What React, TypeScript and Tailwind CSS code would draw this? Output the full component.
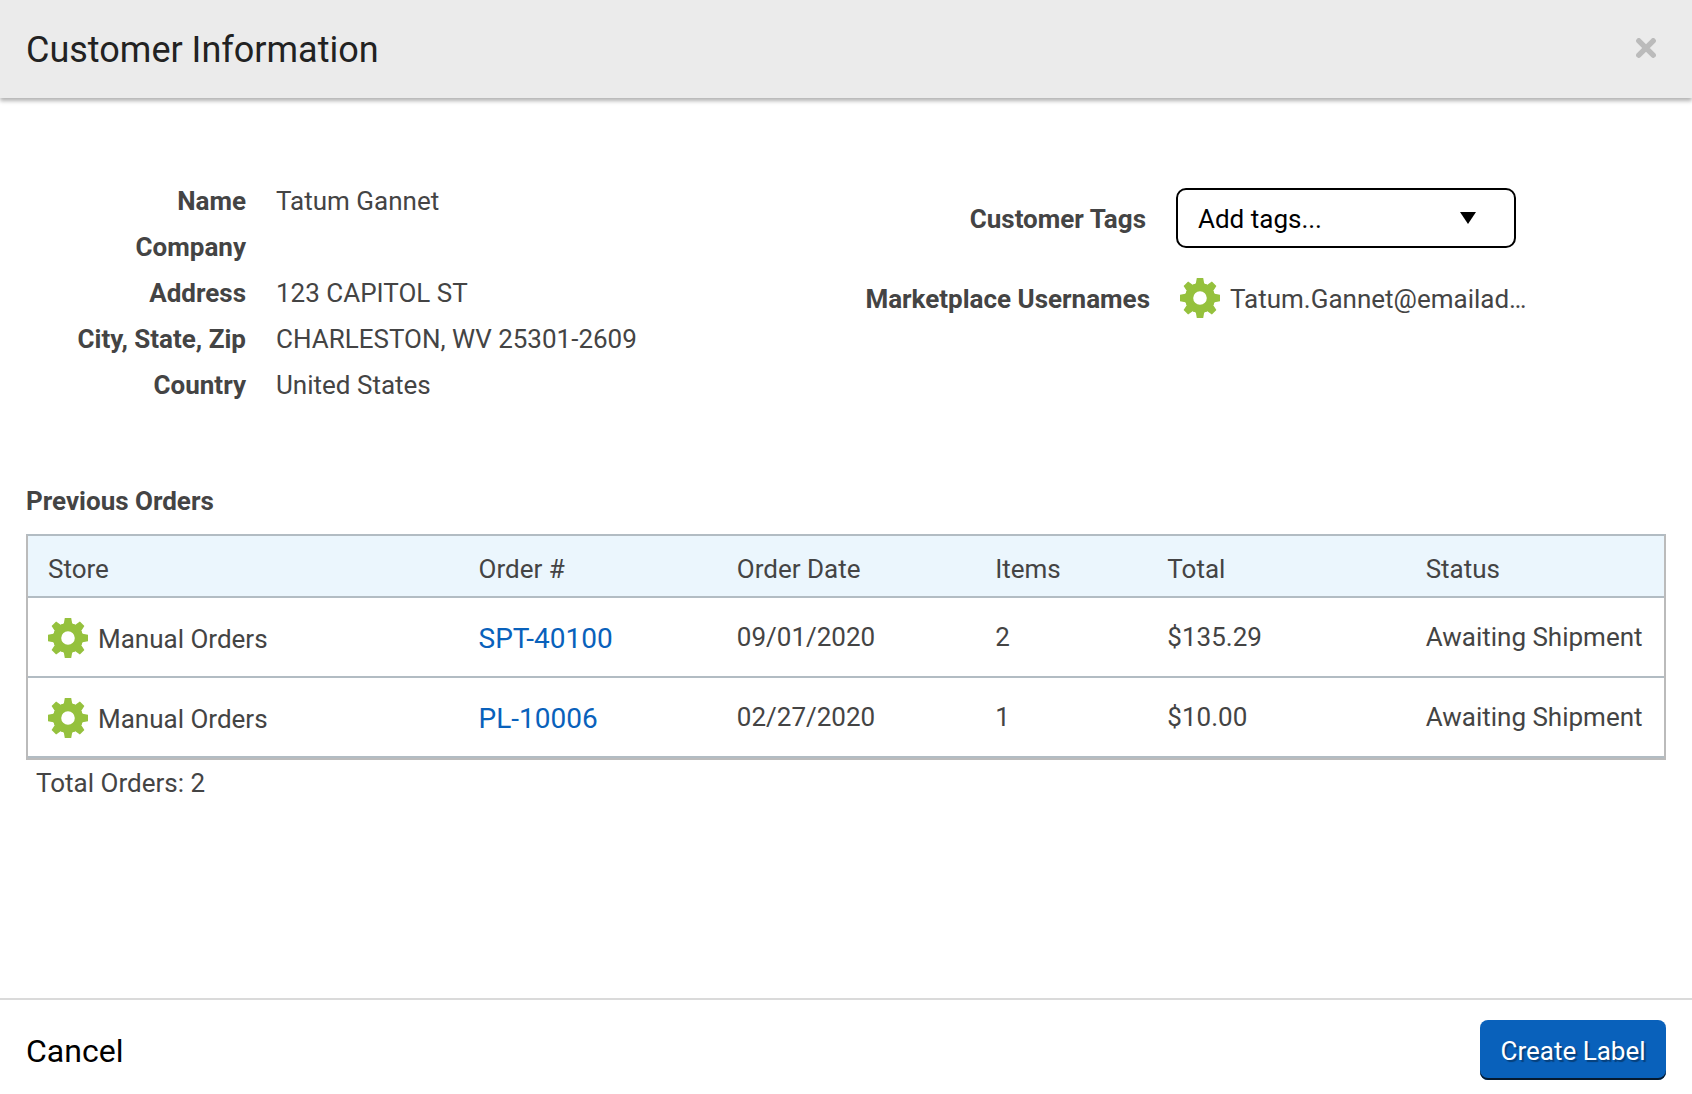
import type { ReactNode } from 'react';

const customer = [
  { label: 'Name', value: 'Tatum Gannet' },
  { label: 'Company', value: '' },
  { label: 'Address', value: '123 CAPITOL ST' },
  { label: 'City, State, Zip', value: 'CHARLESTON, WV 25301-2609' },
  { label: 'Country', value: 'United States' },
];

const orders = [
  { store: 'Manual Orders', number: 'SPT-40100', date: '09/01/2020', items: 2, total: '$135.29', status: 'Awaiting Shipment' },
  { store: 'Manual Orders', number: 'PL-10006', date: '02/27/2020', items: 1, total: '$10.00', status: 'Awaiting Shipment' },
];

const columns = [
  { title: 'Store', width: 'w-5/19' },
  { title: 'Order #', width: 'w-3/19' },
  { title: 'Order Date', width: 'w-3/19' },
  { title: 'Items', width: 'w-2/19' },
  { title: 'Total', width: 'w-3/19' },
  { title: 'Status', width: 'w-3/19' },
];

const GearIcon = () => (
  <svg viewBox="0 0 40 40" className="size-10 shrink-0" fill="#95c13d" aria-hidden="true">
    <circle cx="20" cy="20" r="10.8" fill="none" stroke="#95c13d" strokeWidth="8" />
    {[0, 45, 90, 135, 180, 225, 270, 315].map(angle => (
      <path key={angle} d="M16.8 0h6.4l1 5.4 2.8 1.4V10H13V6.8l2.8-1.4z" transform={`rotate(${angle} 20 20)`} />
    ))}
  </svg>
);

const Cell = ({ children }: { children: ReactNode }) => (
  <td className="h-20 border-b-2 border-[#b2bcc3] pl-5 whitespace-nowrap">{children}</td>
);

export default function App() {
  return (
    <div className="flex min-h-screen flex-col bg-white font-[Roboto,sans-serif] text-[26px] leading-[46px] text-[#444]">
      <header className="flex h-[98px] items-center justify-between bg-[#ebebeb] pr-9 pl-[26px] shadow-[0_3px_4px_rgba(0,0,0,0.3)]">
        <h1 className="pt-0.5 text-4xl text-[#222]">Customer Information</h1>
        <button type="button" aria-label="Close" className="pb-0.5">
          <svg viewBox="0 0 20 20" className="size-5" stroke="#bbb" strokeWidth="5.4" strokeLinecap="round">
            <path d="M2.8 2.8l14.4 14.4M17.2 2.8L2.8 17.2" />
          </svg>
        </button>
      </header>

      <main className="flex-1 px-[26px] pt-20">
        <div className="flex">
          <dl className="w-1/2">
            {customer.map(({ label, value }) => (
              <div className="flex gap-[30px]" key={label}>
                <dt className="w-[220px] text-right font-bold">{label}</dt>
                <dd>{value}</dd>
              </div>
            ))}
          </dl>

          <div className="flex w-1/2 flex-col gap-[30px] pt-2.5">
            <div className="flex items-center gap-[30px]">
              <label htmlFor="tags" className="w-[300px] pt-0.5 text-right font-bold">
                Customer Tags
              </label>
              <div className="relative w-[340px]">
                <select
                  id="tags"
                  className="h-[60px] w-full appearance-none rounded-[10px] border-2 border-black bg-white px-5 pt-0.5 text-black"
                >
                  <option>Add tags...</option>
                </select>
                <svg viewBox="0 0 16 12" className="pointer-events-none absolute top-6 right-10 h-3 w-4">
                  <path d="M0 0h16L8 12z" />
                </svg>
              </div>
            </div>
            <div className="flex h-10 items-center gap-[30px]">
              <span className="w-[304px] pt-0.5 text-right font-bold">Marketplace Usernames</span>
              <div className="flex items-center gap-2.5">
                <GearIcon />
                <span className="pt-0.5">Tatum.Gannet@emailad…</span>
              </div>
            </div>
          </div>
        </div>

        <h2 className="mt-[70px] font-bold">Previous Orders</h2>
        <table className="mt-2.5 w-full table-fixed border-separate border-spacing-0 border-2 border-[#bbb] border-t-[#b2bcc3]">
          <thead>
            <tr>
              {columns.map(({ title, width }) => (
                <th
                  key={title}
                  className={`${width} h-[62px] border-b-2 border-[#b2bcc3] bg-[#ebf6fd] pt-1.5 pl-5 text-left font-normal`}
                >
                  {title}
                </th>
              ))}
            </tr>
          </thead>
          <tbody>
            {orders.map(order => (
              <tr key={order.number}>
                <Cell>
                  <div className="flex items-center gap-2.5 pt-0.5">
                    <GearIcon />
                    <span className="pt-0.5">{order.store}</span>
                  </div>
                </Cell>
                <Cell>
                  <a href="#" className="block pt-1 text-[28px] text-[#0961bb]">
                    {order.number}
                  </a>
                </Cell>
                <Cell>{order.date}</Cell>
                <Cell>{order.items}</Cell>
                <Cell>{order.total}</Cell>
                <Cell>{order.status}</Cell>
              </tr>
            ))}
          </tbody>
        </table>
        <p className="pl-2.5">Total Orders: {orders.length}</p>
      </main>

      <footer className="flex h-24 items-center justify-between border-t-2 border-[#dadada] px-[26px] pt-1.5">
        <button type="button" className="pt-0.5 text-[32px] text-black">
          Cancel
        </button>
        <button
          type="button"
          className="h-[60px] min-w-[186px] rounded-lg bg-[#0961bb] px-5 pt-0.5 text-white shadow-[inset_0_-2px_0_#051a30] text-shadow-[2px_2px_1px_rgba(0,0,0,0.35)]"
        >
          Create Label
        </button>
      </footer>
    </div>
  );
}
